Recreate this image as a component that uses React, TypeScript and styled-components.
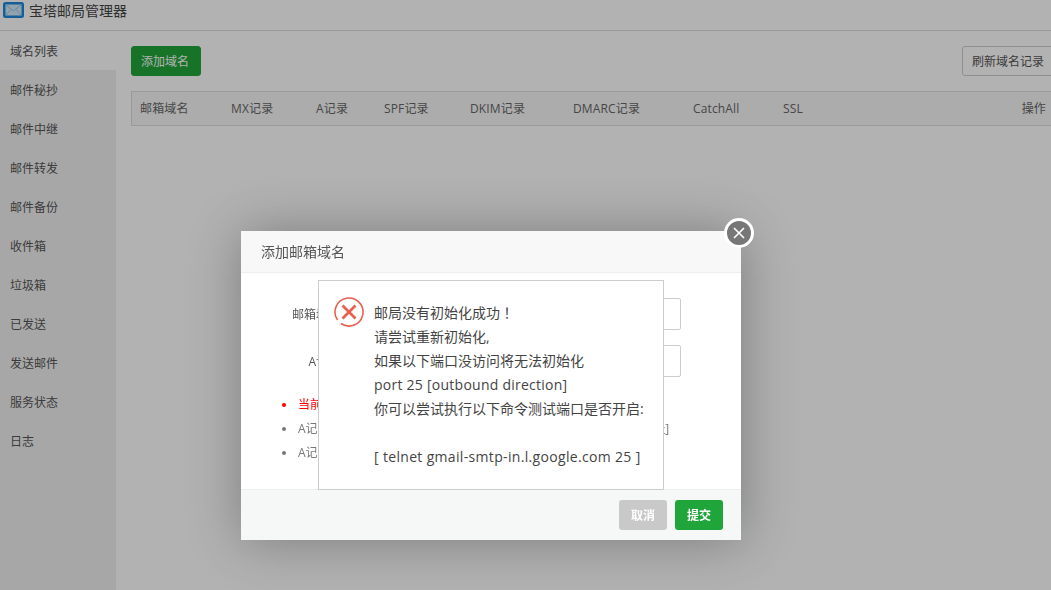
import React from "react";
import styled, { createGlobalStyle } from "styled-components";

const Global = createGlobalStyle`
  html, body { margin: 0; padding: 0; height: 100%; overflow: hidden; background: #fff; }
  body { font-family: "Open Sans", "Noto Sans CJK SC", sans-serif; font-size: 12px; color: #555; }
  #root { height: 100%; }
  * { box-sizing: border-box; }
`;

const Page = styled.div`
  display: flex; flex-direction: column; height: 590px; width: 1051px; overflow: hidden;
`;
const Header = styled.header`
  flex: 0 0 31px; display: flex; align-items: flex-start; gap: 5px; padding: 2px 0 0 3px;
  border-bottom: 1px solid #ddd;
`;
const Title = styled.span`
  font-size: 14px; line-height: 17px; color: #444;
`;
const Body = styled.div`
  flex: 1; display: flex; min-height: 0;
`;
const Sidebar = styled.nav`
  flex: 0 0 116px; background: #f0f0f0; display: flex; flex-direction: column;
`;
const NavItem = styled.div<{ $active?: boolean }>`
  height: 39px; line-height: 42px; padding-left: 10px; font-size: 12px; color: #555;
  background: ${(p) => (p.$active ? "#fff" : "transparent")};
`;
const Main = styled.main`
  flex: 0 0 938px; padding: 15px 0 0 15px;
`;
const Toolbar = styled.div`
  display: flex; justify-content: space-between; align-items: center; height: 30px;
`;
const GreenBtn = styled.button`
  height: 30px; width: 70px; padding: 0 2px 0 0; border: 1px solid #20a53a; border-radius: 3px; background: #20a53a;
  color: #fff; font: inherit; font-size: 12px;
`;
const OutlineBtn = styled.button`
  height: 30px; width: 92px; padding: 0; border: 1px solid #ccc; border-radius: 3px; background: #fff;
  color: #555; font: inherit; font-size: 12px;
`;
const TableHead = styled.div`
  margin-top: 15px; height: 35px; display: grid; align-items: center;
  grid-template-columns: 91px 85px 68px 86px 103px 120px 90px 1fr auto;
  padding: 0 7px 1px 8px; background: #f6f6f6; border: 1px solid #ddd; font-size: 12px; color: #666;
  letter-spacing: 0.15px;
`;
const Overlay = styled.div`
  position: fixed; inset: 0; background: rgba(0, 0, 0, 0.3);
`;
const Modal = styled.section`
  position: absolute; left: 241px; top: 231px; width: 500px; height: 309px; background: #fff;
  display: flex; flex-direction: column; box-shadow: 1px 1px 50px rgba(0, 0, 0, 0.3);
`;
const ModalHeader = styled.div`
  flex: 0 0 42px; padding: 0 20px; line-height: 41px; font-size: 14px; color: #555;
  background: #f8f8f8; border-bottom: 1px solid #eee;
`;
const ModalBody = styled.div`
  flex: 1; padding-top: 25px; display: flex; flex-direction: column; min-height: 0;
`;
const FormRow = styled.div`
  display: flex; align-items: center; height: 32px; margin-bottom: 15px;
`;
const Label = styled.label`
  flex: 0 0 100px; text-align: right; padding-right: 1px; font-size: 12px; color: #555;
`;
const Input = styled.div`
  width: 340px; height: 32px; border: 1px solid #ccc; border-radius: 2px;
`;
const Notes = styled.ul`
  list-style: none; margin: 1px 0 0; padding: 0 0 0 57px; white-space: nowrap;
`;
const Note = styled.li<{ $red?: boolean }>`
  position: relative; height: 24px; line-height: 24px; font-size: 12px;
  color: ${(p) => (p.$red ? "#f00" : "#777")};
  &::before {
    content: ""; position: absolute; left: -16px; top: 10px; width: 4px; height: 4px; border-radius: 50%;
    background: ${(p) => (p.$red ? "#f00" : "#777")};
  }
`;
const ModalFooter = styled.div`
  flex: 0 0 51px; display: flex; justify-content: flex-end; align-items: center; gap: 8px;
  padding: 0 18px; background: #f6f8f8; border-top: 1px solid #eee;
`;
const FooterBtn = styled.button<{ $green?: boolean }>`
  width: 48px; height: 30px; border: 0; border-radius: 3px; padding: 0; font: inherit; font-size: 12px;
  font-weight: 700; color: #fff; background: ${(p) => (p.$green ? "#20a53a" : "#c9c9c9")};
`;
const Close = styled.button`
  position: absolute; left: 483px; top: -13px; width: 30px; height: 30px; padding: 0; border-radius: 50%;
  border: 3px solid #fff; background: #777; display: flex; align-items: center; justify-content: center;
`;
const Alert = styled.div`
  position: fixed; left: 318px; top: 280px; width: 346px; height: 210px; background: #fff;
  border: 1px solid #ccc; display: flex; gap: 10px; padding: 16px 0 0 15px;
`;
const AlertIcon = styled.svg`
  flex: 0 0 30px; width: 30px; height: 30px;
`;
const AlertText = styled.div`
  padding-top: 3px; font-size: 14px; line-height: 24px; color: #444; white-space: pre;
`;
const Latin = styled.span<{ $wide?: boolean }>`
  letter-spacing: ${(p) => (p.$wide ? "0.33px" : "0.25px")};
`;
const FullMark = styled.span`
  font-family: "Noto Sans CJK TC", sans-serif;
`;

const MailIcon = () => (
  <svg width="21" height="16" viewBox="0 0 21 16">
    <rect width="21" height="16" rx="2.5" fill="#1e88d8" />
    <rect x="2.5" y="2.5" width="16" height="11" fill="#d2eafa" />
    <path d="M2.5 2.5 10.5 9 18.5 2.5M2.5 13.5 8 7.5M18.5 13.5 13 7.5" fill="none" stroke="#8cc4ea" strokeWidth="1" />
  </svg>
);

const nav = ["域名列表", "邮件秘抄", "邮件中继", "邮件转发", "邮件备份", "收件箱", "垃圾箱", "已发送", "发送邮件", "服务状态", "日志"];
const cols = ["邮箱域名", "MX记录", "A记录", "SPF记录", "DKIM记录", "DMARC记录", "CatchAll", "SSL", "操作"];

export default function App() {
  return (
    <Page>
      <Global />
      <Header>
        <MailIcon />
        <Title>宝塔邮局管理器</Title>
      </Header>
      <Body>
        <Sidebar>
          {nav.map((n, i) => (
            <NavItem key={n} $active={i === 0}>{n}</NavItem>
          ))}
        </Sidebar>
        <Main>
          <Toolbar>
            <GreenBtn>添加域名</GreenBtn>
            <OutlineBtn>刷新域名记录</OutlineBtn>
          </Toolbar>
          <TableHead>
            {cols.map((c) => (
              <span key={c}>{c}</span>
            ))}
          </TableHead>
        </Main>
      </Body>
      <Overlay />
      <Modal>
        <ModalHeader>添加邮箱域名</ModalHeader>
        <ModalBody>
          <FormRow>
            <Label>邮箱域名</Label>
            <Input />
          </FormRow>
          <FormRow>
            <Label>A记录</Label>
            <Input />
          </FormRow>
          <Notes>
            <Note $red>当前未配置服务器IP地址，请先确认解析记录</Note>
            <Note>A记录解析参数：主机记录:mail 记录值:[当前您的服务器的公网IP地址]</Note>
            <Note>A记录解析后才能继续添加邮箱域名</Note>
          </Notes>
        </ModalBody>
        <ModalFooter>
          <FooterBtn>取消</FooterBtn>
          <FooterBtn $green>提交</FooterBtn>
        </ModalFooter>
        <Close aria-label="关闭">
          <svg width="12" height="12" viewBox="0 0 12 12">
            <path d="M1 1 11 11M11 1 1 11" stroke="#fff" strokeWidth="1.6" fill="none" />
          </svg>
        </Close>
      </Modal>
      <Alert>
        <AlertIcon viewBox="0 0 30 30">
          <path d="M3.53 23.03A14 14 0 1 1 6.97 26.47" fill="none" stroke="#e9604f" strokeWidth="1.6" />
          <path d="M8.5 8.5 21.5 21.5M21.5 8.5 8.5 21.5" stroke="#e9604f" strokeWidth="2.8" fill="none" />
        </AlertIcon>
        <AlertText>
          邮局没有初始化成功<FullMark>！</FullMark>{"\n"}
          {"请尝试重新初始化,\n如果以下端口没访问将无法初始化\n"}
          <Latin>port 25 [outbound direction]</Latin>{"\n"}
          {"你可以尝试执行以下命令测试端口是否开启:\n\n"}
          <Latin $wide>[ telnet gmail-smtp-in.l.google.com 25 ]</Latin>
        </AlertText>
      </Alert>
    </Page>
  );
}
